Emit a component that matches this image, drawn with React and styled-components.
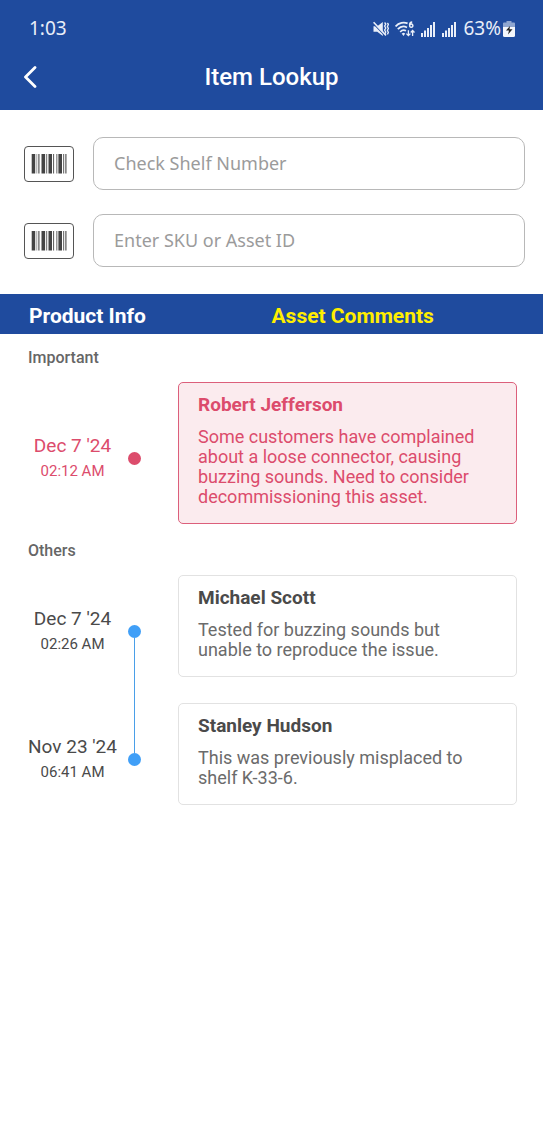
import React, { useState } from "react";
import styled, { createGlobalStyle } from "styled-components";

const GlobalStyle = createGlobalStyle`
  * {
    box-sizing: border-box;
  }

  body {
    margin: 0;
    background: #ffffff;
    font-family: Roboto, "Liberation Sans", sans-serif;
  }
`;

const Header = styled.header`
  background: #1f4b9e;
  color: #ffffff;
`;

const StatusBar = styled.div`
  display: flex;
  align-items: center;
  justify-content: space-between;
  height: 44px;
  padding: 12px 28px 0 29px;
  color: #e9eef8;
  font-family: "Noto Sans", sans-serif;
  font-size: 19px;
  line-height: 32px;
`;

const StatusIcons = styled.div`
  display: flex;
  align-items: center;
  gap: 6px;

  svg {
    margin-top: 2px;
  }
`;

const BatteryLevel = styled.span`
  display: flex;
  align-items: center;
  gap: 2px;
`;

const TitleBar = styled.div`
  display: grid;
  grid-template-columns: 44px 1fr 44px;
  align-items: center;
  height: 66px;
  padding: 0 8px;
`;

const BackButton = styled.button`
  display: flex;
  align-items: center;
  justify-content: center;
  height: 44px;
  padding: 0;
  border: none;
  background: none;
  color: inherit;
  cursor: pointer;
`;

const Title = styled.h1`
  margin: 0;
  font-size: 24px;
  font-weight: 500;
  line-height: 32px;
  text-align: center;
`;

const LookupForm = styled.form`
  display: flex;
  flex-direction: column;
  gap: 24px;
  padding: 27px 18px 27px 24px;
`;

const Field = styled.div`
  display: flex;
  align-items: center;
  gap: 19px;
`;

const ScanButton = styled.button`
  display: flex;
  align-items: center;
  justify-content: center;
  flex-shrink: 0;
  width: 50px;
  height: 36px;
  padding: 0;
  border: 1px solid #555555;
  border-radius: 4px;
  background: #ffffff;
  cursor: pointer;
`;

const TextInput = styled.input`
  flex: 1;
  min-width: 0;
  height: 53px;
  padding: 0 20px 2px;
  border: 1px solid #b8b8b8;
  border-radius: 10px;
  color: #444444;
  font-family: "Noto Sans", sans-serif;
  font-size: 18px;

  &::placeholder {
    color: #9b9b9b;
    opacity: 1;
  }
`;

const Tabs = styled.nav`
  display: grid;
  grid-template-columns: 1fr 1fr;
  margin-bottom: 7px;
  background: #1f4b9e;
`;

const Tab = styled.button`
  height: 40px;
  padding: 3px 0 0 ${(props) => (props.$first ? "29px" : "0")};
  border: none;
  background: none;
  color: ${(props) => (props.$active ? "#ffee00" : "#ffffff")};
  font-family: inherit;
  font-size: 21px;
  font-weight: 700;
  text-align: left;
  cursor: pointer;
`;

const Section = styled.section`
  padding: 7px 26px 0 28px;
`;

const SectionTitle = styled.h2`
  margin: 0 0 14px;
  color: #666666;
  font-size: 16px;
  font-weight: 500;
  line-height: 20px;
`;

const Timeline = styled.ol`
  margin: 0;
  padding: 0;
  list-style: none;
`;

const TimelineItem = styled.li`
  display: grid;
  grid-template-columns: 89px 34px 1fr;
  color: ${(props) => (props.$important ? "#dc4c6c" : "#4a4a4a")};
`;

const When = styled.time`
  display: flex;
  flex-direction: column;
  align-items: center;
  justify-content: center;
  white-space: nowrap;
`;

const Day = styled.span`
  font-size: 19px;
  line-height: 26px;
`;

const Hour = styled.span`
  font-size: 15px;
  line-height: 24px;
`;

const Rail = styled.div`
  display: grid;
  grid-template-rows: 1fr 13px 1fr;
  justify-items: center;
`;

const Line = styled.span`
  width: 1px;
  background: ${(props) => (props.$visible ? "#4a9fe8" : "transparent")};
`;

// Bridges the gap between two items of the timeline
const Connector = styled(Line)`
  grid-column: 2;
  justify-self: center;
  height: 16px;
`;

const Dot = styled.span`
  width: 13px;
  height: 13px;
  border-radius: 50%;
  background: ${(props) => (props.$important ? "#dc4c6c" : "#409ff7")};
`;

const Card = styled.article`
  margin: 0 0 10px 27px;
  padding: 10px 19px 16px;
  border: 1px solid ${(props) => (props.$important ? "#dc5f7b" : "#e2e2e2")};
  border-radius: 5px;
  background: ${(props) => (props.$important ? "#fbebee" : "#ffffff")};
`;

const Author = styled.h3`
  margin: 0 0 10px;
  font-size: 19px;
  font-weight: 700;
  line-height: 24px;
`;

const Comment = styled.p`
  margin: 0;
  color: ${(props) => (props.$important ? "inherit" : "#6b6b6b")};
  font-size: 18px;
  line-height: 20px;
`;

const importantComments = [
  {
    author: "Robert Jefferson",
    day: "Dec 7 '24",
    hour: "02:12 AM",
    text: "Some customers have complained about a loose connector, causing buzzing sounds. Need to consider decommissioning this asset.",
  },
];

const otherComments = [
  {
    author: "Michael Scott",
    day: "Dec 7 '24",
    hour: "02:26 AM",
    text: "Tested for buzzing sounds but unable to reproduce the issue.",
  },
  {
    author: "Stanley Hudson",
    day: "Nov 23 '24",
    hour: "06:41 AM",
    text: "This was previously misplaced to shelf K-33-6.",
  },
];

const MutedIcon = () => (
  <svg width="16" height="16" viewBox="0 0 16 16" fill="currentColor">
    <path d="M.5 5.200h3.800L9.800 1v14L4.300 10.800H.5z" />
    <path
      d="M11.600 1.500l1.200 1.600-1.200 2 1.200 2-1.200 2 1.200 2-1.200 2.400M14.400 2l1 1.400-1 2 1 2-1 2 1 2-1 2"
      fill="none"
      stroke="currentColor"
      strokeWidth="1.300"
    />
    <path d="M.6 2.800l11.500 12" stroke="#1f4b9e" strokeWidth="1.200" />
    <path d="M.6 1.200l12.400 13.200" stroke="currentColor" strokeWidth="1.600" />
  </svg>
);

const WifiIcon = () => (
  <svg
    width="20"
    height="16"
    viewBox="0 0 20 16"
    fill="none"
    stroke="currentColor"
    strokeWidth="1.700"
  >
    <path d="M.6 5.400C3.800 1.600 9 .8 12.600 2.400M2.800 8.200C5.400 5.400 9 4.800 12 6.400M5.200 11c1.600-1.800 3.800-2.200 5.800-1.200" />
    <path d="M6.600 12.600l2-.9 1.600.9-1.700 2.400z" fill="currentColor" stroke="none" />
    <path
      d="M17.200.9c-1.800.1-2.600 1.300-2.600 3.200M16.200 3.100a1.600 1.600 0 1 0 .1 0z"
      strokeWidth="1.500"
    />
    <path
      d="M13.400 9.200v5.300M11.400 12.600l2 2 2-2M17.600 15V9.600M15.700 11.500l1.900-2 1.900 2"
      strokeWidth="1.300"
    />
  </svg>
);

const SignalIcon = () => (
  <svg width="15" height="15" viewBox="0 0 15 15" fill="currentColor">
    <rect x="0" y="11" width="2" height="4" />
    <rect x="3" y="8.5" width="2" height="6.5" />
    <rect x="6" y="6" width="2" height="9" />
    <rect x="9" y="3" width="2" height="12" />
    <rect x="12" y="0" width="2" height="15" />
  </svg>
);

const BatteryIcon = () => (
  <svg width="12" height="16" viewBox="0 0 12 16">
    <path
      d="M3.500 0h5v1.600H11a1 1 0 0 1 1 1V6H0V2.600a1 1 0 0 1 1-1h2.500z"
      fill="#8fa6d0"
    />
    <path
      d="M0 6h12v8.500A1.500 1.500 0 0 1 10.500 16h-9A1.500 1.500 0 0 1 0 14.500z"
      fill="#f4f6fb"
    />
    <path d="M7 5L3 9.600H6L5 13.500 9.500 8.300H6.500z" fill="#222222" />
  </svg>
);

const BackIcon = () => (
  <svg width="14" height="22" viewBox="0 0 14 22" fill="none">
    <path
      d="M12 1.500L2.500 11 12 20.500"
      stroke="currentColor"
      strokeWidth="2.800"
      strokeLinecap="round"
      strokeLinejoin="round"
    />
  </svg>
);

// x, width and colour of each bar
const bars = [
  [0.7, 3.5, "#444"],
  [5, 1.2, "#bbb"],
  [6.9, 1.8, "#888"],
  [10.5, 3.6, "#444"],
  [15.1, 1.1, "#777"],
  [17.5, 3.5, "#444"],
  [22, 1.1, "#666"],
  [25, 1.5, "#999"],
  [27.4, 3.6, "#444"],
  [32, 1.1, "#777"],
  [33.9, 1.8, "#888"],
];

const BarcodeIcon = () => (
  <svg width="36" height="20" viewBox="0 0 36 20">
    {bars.map(([x, width, fill]) => (
      <rect key={x} x={x} y="0" width={width} height="19.5" fill={fill} />
    ))}
  </svg>
);

const LookupField = ({ id, label, scanLabel }) => {
  const [value, setValue] = useState("");

  return (
    <Field>
      <ScanButton type="button" aria-label={scanLabel}>
        <BarcodeIcon />
      </ScanButton>
      <TextInput
        id={id}
        aria-label={label}
        placeholder={label}
        value={value}
        onChange={(e) => setValue(e.target.value)}
      />
    </Field>
  );
};

const CommentList = ({ title, comments, important }) => (
  <Section>
    <SectionTitle>{title}</SectionTitle>
    <Timeline>
      {comments.map((comment, index) => {
        const hasNext = index < comments.length - 1;

        return (
          <TimelineItem key={comment.author} $important={important}>
            <When>
              <Day>{comment.day}</Day>
              <Hour>{comment.hour}</Hour>
            </When>
            <Rail>
              <Line $visible={index > 0} />
              <Dot $important={important} />
              <Line $visible={hasNext} />
            </Rail>
            <Card $important={important}>
              <Author>{comment.author}</Author>
              <Comment $important={important}>{comment.text}</Comment>
            </Card>
            {hasNext && <Connector $visible />}
          </TimelineItem>
        );
      })}
    </Timeline>
  </Section>
);

const App = () => {
  const [activeTab, setActiveTab] = useState("comments");

  return (
    <>
      <GlobalStyle />
      <Header>
        <StatusBar>
          <span>1:03</span>
          <StatusIcons>
            <MutedIcon />
            <WifiIcon />
            <SignalIcon />
            <SignalIcon />
            <BatteryLevel>
              63%
              <BatteryIcon />
            </BatteryLevel>
          </StatusIcons>
        </StatusBar>
        <TitleBar>
          <BackButton aria-label="Back">
            <BackIcon />
          </BackButton>
          <Title>Item Lookup</Title>
        </TitleBar>
      </Header>

      <main>
        <LookupForm onSubmit={(e) => e.preventDefault()}>
          <LookupField
            id="shelf"
            label="Check Shelf Number"
            scanLabel="Scan shelf"
          />
          <LookupField
            id="asset"
            label="Enter SKU or Asset ID"
            scanLabel="Scan asset"
          />
        </LookupForm>

        <Tabs>
          <Tab
            $first
            $active={activeTab === "info"}
            onClick={() => setActiveTab("info")}
          >
            Product Info
          </Tab>
          <Tab
            $active={activeTab === "comments"}
            onClick={() => setActiveTab("comments")}
          >
            Asset Comments
          </Tab>
        </Tabs>

        <CommentList title="Important" comments={importantComments} important />
        <CommentList title="Others" comments={otherComments} />
      </main>
    </>
  );
};

export default App;
